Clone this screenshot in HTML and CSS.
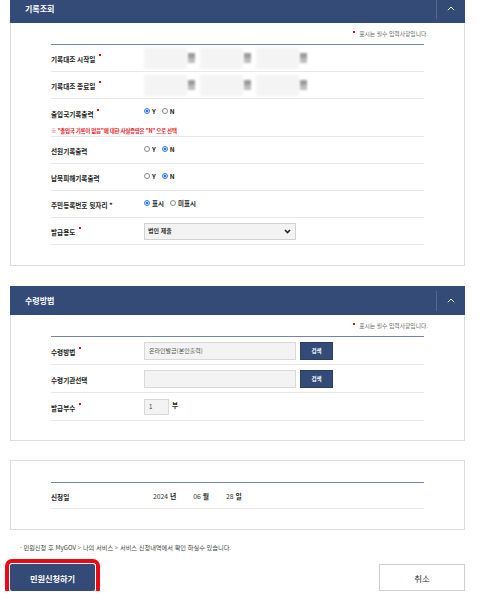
FILE: index.html
```html
<!DOCTYPE html>
<html lang="ko">
<head>
<meta charset="utf-8">
<title>기록조회</title>
<link rel="stylesheet" href="styles.css">
</head>
<body>
<div class="page">

  <section class="panel panel-first">
    <div class="panel-head">
      <h2 class="panel-title">기록조회</h2>
      <button class="toggle" type="button" aria-label="접기">
        <svg width="8" height="5" viewBox="0 0 8 5"><polyline points="0.8,4.2 4,1 7.2,4.2" fill="none" stroke="#fff" stroke-width="1"/></svg>
      </button>
    </div>
    <div class="panel-body">
      <p class="req-note"><span class="req req-note-dot"></span>표시는 필수 입력사항입니다.</p>
      <div class="form-table">
        <div class="row">
          <div class="label">기록대조 시작일<span class="req"></span></div>
          <div class="value date-group">
            <span class="date-item"><span class="date-box"></span><span class="date-unit"></span></span>
            <span class="date-item"><span class="date-box"></span><span class="date-unit"></span></span>
            <span class="date-item"><span class="date-box"></span><span class="date-unit"></span></span>
          </div>
        </div>
        <div class="row">
          <div class="label">기록대조 종료일<span class="req"></span></div>
          <div class="value date-group">
            <span class="date-item"><span class="date-box"></span><span class="date-unit"></span></span>
            <span class="date-item"><span class="date-box"></span><span class="date-unit"></span></span>
            <span class="date-item"><span class="date-box"></span><span class="date-unit"></span></span>
          </div>
        </div>
        <div class="row row-warn">
          <div class="label">출입국기록출력<span class="req"></span></div>
          <div class="value">
            <span class="radio"><i class="on"></i>Y</span>
            <span class="radio"><i></i>N</span>
          </div>
          <p class="warn">※ "출입국 기록이 없음"에 대한 사실증명은 "N" 으로 선택</p>
        </div>
        <div class="row">
          <div class="label">선원기록출력</div>
          <div class="value">
            <span class="radio"><i></i>Y</span>
            <span class="radio"><i class="on"></i>N</span>
          </div>
        </div>
        <div class="row">
          <div class="label">납북피해기록출력</div>
          <div class="value">
            <span class="radio"><i></i>Y</span>
            <span class="radio"><i class="on"></i>N</span>
          </div>
        </div>
        <div class="row">
          <div class="label">주민등록번호 뒷자리 *</div>
          <div class="value">
            <span class="radio"><i class="on"></i>표시</span>
            <span class="radio"><i></i>미표시</span>
          </div>
        </div>
        <div class="row">
          <div class="label">발급용도<span class="req"></span></div>
          <div class="value">
            <div class="select">
              <span>법인 제출</span>
              <svg width="7" height="5" viewBox="0 0 7 5"><polyline points="1,1 3.5,3.5 6,1" fill="none" stroke="#222" stroke-width="1.6"/></svg>
            </div>
          </div>
        </div>
      </div>
    </div>
  </section>

  <section class="panel">
    <div class="panel-head">
      <h2 class="panel-title">수령방법</h2>
      <button class="toggle" type="button" aria-label="접기">
        <svg width="8" height="5" viewBox="0 0 8 5"><polyline points="0.8,4.2 4,1 7.2,4.2" fill="none" stroke="#fff" stroke-width="1"/></svg>
      </button>
    </div>
    <div class="panel-body panel-body-2">
      <p class="req-note"><span class="req req-note-dot"></span>표시는 필수 입력사항입니다.</p>
      <div class="form-table">
        <div class="row row-tall">
          <div class="label">수령방법<span class="req"></span></div>
          <div class="value">
            <span class="field">온라인발급(본인출력)</span>
            <button class="search-btn" type="button">검색</button>
          </div>
        </div>
        <div class="row row-tall">
          <div class="label">수령기관선택</div>
          <div class="value">
            <span class="field"></span>
            <button class="search-btn" type="button">검색</button>
          </div>
        </div>
        <div class="row row-tall">
          <div class="label">발급부수<span class="req"></span></div>
          <div class="value">
            <span class="field field-qty">1</span>
            <span class="unit">부</span>
          </div>
        </div>
      </div>
    </div>
  </section>

  <section class="panel panel-plain">
    <div class="form-table">
      <div class="row row-date">
        <div class="label">신청일</div>
        <div class="value ymd">
          <span>2024 <b>년</b></span>
          <span>06 <b>월</b></span>
          <span>28 <b>일</b></span>
        </div>
      </div>
    </div>
  </section>

  <p class="bottom-note">· 민원신청 후 MyGOV &gt; 나의 서비스 &gt; 서비스 신청내역에서 확인 하실수 있습니다.</p>

  <div class="actions">
    <button class="btn-primary" type="button">민원신청하기</button>
    <button class="btn-cancel" type="button">취소</button>
  </div>

</div>
</body>
</html>
```

FILE: styles.css
```css
* { box-sizing: border-box; }

body {
  margin: 0;
  background: #fff;
  font-family: "Noto Sans CJK KR", "Noto Sans", sans-serif;
  color: #222;
}

.page {
  padding: 0 26px 0 10px;
}

.panel-first { margin-top: -6px; }
.panel + .panel { margin-top: 20px; }
.panel-plain { margin-top: 19px !important; }

.panel-head {
  display: flex;
  align-items: center;
  height: 29px;
  background: #344b78;
}

.panel-title {
  flex: 1;
  margin: 0;
  padding-left: 15px;
  font-size: 8px;
  font-weight: 700;
  line-height: 29px;
  color: #fff;
}

.toggle {
  display: flex;
  align-items: center;
  justify-content: center;
  width: 29px;
  height: 20px;
  padding: 0;
  border: 0;
  border-left: 1px solid rgba(255, 255, 255, 0.16);
  background: none;
}

.panel-body {
  border: 1px solid #dddddd;
  border-top: 0;
  padding: 6px 40px 20px;
}

.panel-body-2 { padding-bottom: 19px; }

.panel-plain {
  border: 1px solid #dddddd;
  padding: 21px 40px 20px;
}

.req-note {
  margin: 0 -4px 5px 0;
  text-align: right;
  font-size: 5.8px;
  line-height: 10px;
  color: #666;
}

.req {
  display: inline-block;
  width: 2px;
  height: 2px;
  margin-left: 4px;
  background: #e60012;
  vertical-align: 6px;
}

.req-note-dot {
  margin: 0 4px 0 0;
  vertical-align: 3px;
}

.form-table {
  border-top: 1px solid #7385a9;
}

.row {
  display: grid;
  grid-template-columns: 93px 1fr;
  align-items: center;
  height: 27px;
  border-bottom: 1px solid #e8e8e8;
}

.row-tall { height: 28px; }
.row-date { height: 26px; }

.row-warn {
  height: 38px;
  grid-template-rows: 27px 10px;
}

.label {
  font-size: 6.6px;
  font-weight: 700;
  line-height: 10px;
  color: #222;
  padding-top: 2px;
}

.value {
  display: flex;
  align-items: center;
  font-size: 6.5px;
  line-height: 10px;
}

.warn {
  grid-column: 1 / -1;
  margin: 0;
  font-size: 5.5px;
  font-weight: 700;
  letter-spacing: -0.3px;
  line-height: 10px;
  color: #e8191f;
}

/* blurred date inputs */
.date-group {
  gap: 5px;
  filter: blur(1px);
}

.date-item {
  display: flex;
  align-items: center;
  gap: 1px;
}

.date-box {
  width: 43px;
  height: 21px;
  background: #f4f4f4;
}

.date-unit {
  width: 7px;
  height: 10px;
  background: linear-gradient(#9a9a9a 0 50%, #bdbdbd 50% 100%);
}

/* radios */
.radio {
  display: inline-flex;
  align-items: center;
  gap: 2px;
  margin-right: 6px;
  margin-top: -3px;
  font-weight: 700;
  color: #222;
}

.radio i {
  display: inline-block;
  width: 6px;
  height: 6px;
  border: 1px solid #8a8a8a;
  border-radius: 50%;
  background: #fff;
}

.radio i.on {
  border-color: #3b7de9;
  background: radial-gradient(circle, #2f74e6 0 45%, #cfe0fb 55% 100%);
}

/* select */
.select {
  display: flex;
  align-items: center;
  justify-content: space-between;
  width: 152px;
  height: 17px;
  padding: 0 4px 0 3px;
  border: 1px solid #d2d2d2;
  background: #f3f3f3;
  font-size: 6px;
  font-weight: 700;
  color: #333;
}

/* fields */
.field {
  display: flex;
  align-items: center;
  width: 152px;
  height: 18px;
  padding-left: 4px;
  border: 1px solid #d8d8d8;
  background: #f3f3f3;
  font-size: 6px;
  color: #555;
}

.field-qty {
  width: 25px;
  height: 16px;
  padding-left: 4px;
  color: #333;
}

.unit {
  margin-left: 3px;
  font-weight: 700;
  margin-top: -4px;
}

.search-btn {
  width: 33px;
  height: 18px;
  margin-left: 4px;
  padding: 0;
  border: 0;
  background: #344b78;
  color: #fff;
  font-family: inherit;
  font-size: 5.5px;
  font-weight: 700;
  box-shadow: inset 0 0 0 1px #2b3f66;
}

.ymd {
  gap: 17px;
  padding-left: 9px;
  font-size: 6.8px;
  color: #333;
}

.ymd b { font-weight: 700; color: #222; }

.bottom-note {
  margin: 13px 0 0 10px;
  font-size: 6.2px;
  line-height: 10px;
  color: #444;
}

.actions {
  display: flex;
  justify-content: space-between;
  margin-top: 11px;
}

.btn-primary {
  width: 85px;
  height: 27px;
  padding: 0;
  border: 0;
  border-radius: 2px;
  background: #344b78;
  color: #fff;
  font-family: inherit;
  font-size: 8.2px;
  font-weight: 700;
  outline: 4px solid #ea0a14;
  outline-offset: 1px;
}

.btn-cancel {
  width: 86px;
  height: 27px;
  padding: 0;
  border: 1px solid #cfcfcf;
  background: #fff;
  color: #333;
  font-family: inherit;
  font-size: 8.5px;
  box-shadow: 0 1px 1px rgba(0, 0, 0, 0.08);
}
```
